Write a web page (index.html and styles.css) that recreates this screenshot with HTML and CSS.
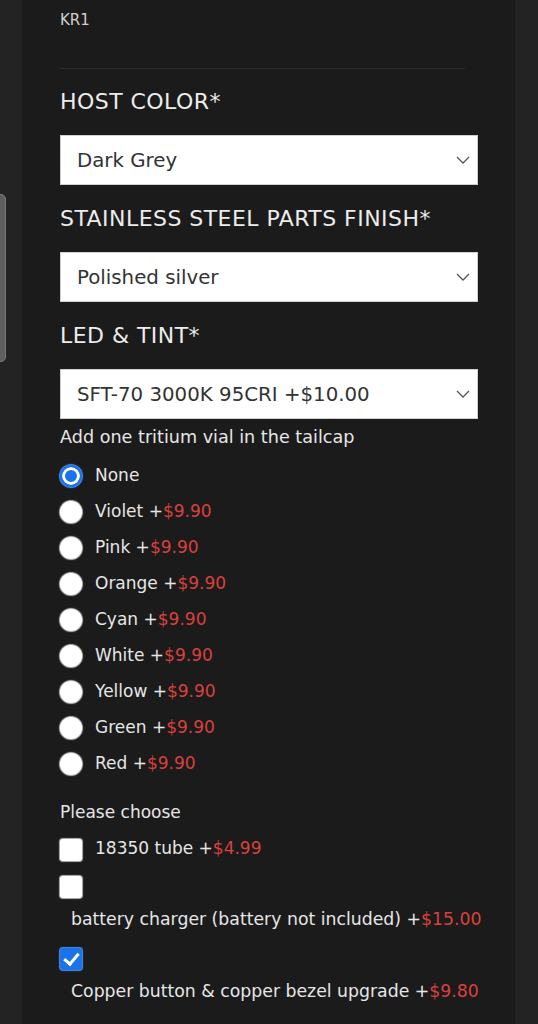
FILE: index.html
```html
<!DOCTYPE html>
<html lang="en">
<head>
    <meta charset="UTF-8">
    <meta name="viewport" content="width=device-width, initial-scale=1.0">
    <title>KR1 Options</title>
    <link rel="stylesheet" href="styles.css">
</head>
<body>

<div class="scroll-tab"></div>

<div class="panel">
    <div class="sku">KR1</div>
    <hr class="divider">

    <form id="options-form">
        <label class="field-title" for="host-color">HOST COLOR*</label>
        <div class="select-wrap">
            <select id="host-color" name="host-color">
                <option>Dark Grey</option>
                <option>Black</option>
            </select>
            <svg class="chevron" width="14" height="8" viewBox="0 0 14 8"><path d="M1 1l6 6 6-6" fill="none" stroke="#555" stroke-width="1.3"/></svg>
        </div>

        <label class="field-title" for="steel-finish">STAINLESS STEEL PARTS FINISH*</label>
        <div class="select-wrap">
            <select id="steel-finish" name="steel-finish">
                <option>Polished silver</option>
            </select>
            <svg class="chevron" width="14" height="8" viewBox="0 0 14 8"><path d="M1 1l6 6 6-6" fill="none" stroke="#555" stroke-width="1.3"/></svg>
        </div>

        <label class="field-title" for="led-tint">LED &amp; TINT*</label>
        <div class="select-wrap">
            <select id="led-tint" name="led-tint">
                <option>SFT-70 3000K 95CRI +$10.00</option>
            </select>
            <svg class="chevron" width="14" height="8" viewBox="0 0 14 8"><path d="M1 1l6 6 6-6" fill="none" stroke="#555" stroke-width="1.3"/></svg>
        </div>

        <div class="group-title">Add one tritium vial in the tailcap</div>
        <div class="radio-list">
            <label class="radio-row"><input type="radio" name="tritium" checked>None</label>
            <label class="radio-row"><input type="radio" name="tritium">Violet +<span class="price">$9.90</span></label>
            <label class="radio-row"><input type="radio" name="tritium">Pink +<span class="price">$9.90</span></label>
            <label class="radio-row"><input type="radio" name="tritium">Orange +<span class="price">$9.90</span></label>
            <label class="radio-row"><input type="radio" name="tritium">Cyan +<span class="price">$9.90</span></label>
            <label class="radio-row"><input type="radio" name="tritium">White +<span class="price">$9.90</span></label>
            <label class="radio-row"><input type="radio" name="tritium">Yellow +<span class="price">$9.90</span></label>
            <label class="radio-row"><input type="radio" name="tritium">Green +<span class="price">$9.90</span></label>
            <label class="radio-row"><input type="radio" name="tritium">Red +<span class="price">$9.90</span></label>
        </div>

        <div class="group-title choose">Please choose</div>
        <label class="check-row"><input type="checkbox" name="tube">18350 tube +<span class="price">$4.99</span></label>
        <div class="check-block">
            <input type="checkbox" id="charger" name="charger">
            <label class="check-label" for="charger">battery charger (battery not included) +<span class="price">$15.00</span></label>
        </div>
        <div class="check-block">
            <input type="checkbox" id="copper" name="copper" checked>
            <label class="check-label" for="copper">Copper button &amp; copper bezel upgrade +<span class="price">$9.80</span></label>
        </div>
    </form>
</div>

</body>
</html>
```

FILE: styles.css
```css
body {
    margin: 0;
    background-color: #232323;
    font-family: "DejaVu Sans", sans-serif;
    color: #e8e8e8;
    height: 1024px;
    overflow: hidden;
}
.scroll-tab {
    position: absolute;
    left: -4px;
    top: 194px;
    width: 8px;
    height: 166px;
    background-color: #5f5f5f;
    border: 1px solid #7a7a7a;
    border-radius: 6px;
}
.panel {
    margin-left: 22px;
    width: 418px;
    min-height: 1024px;
    padding: 10px 37px 0 38px;
    background-color: #1b1b1b;
}
.sku {
    font-size: 15px;
    line-height: 20px;
    color: #cfcfcf;
}
.divider {
    margin: 38px 13px 0 0;
    border: none;
    border-top: 1px solid #2b2b2b;
}
.field-title {
    display: block;
    margin: 19px 0 19px;
    font-size: 22px;
    line-height: 28px;
    letter-spacing: 0.45px;
    color: #ececec;
}
.select-wrap + .field-title {
    margin-top: 20px;
}
.select-wrap {
    position: relative;
    height: 50px;
}
.select-wrap select {
    appearance: none;
    -webkit-appearance: none;
    width: 100%;
    height: 50px;
    padding: 0 40px 0 16px;
    border: 1px solid #cfcfcf;
    border-radius: 0;
    background-color: #fff;
    font-family: inherit;
    font-size: 19.8px;
    color: #333;
}
.chevron {
    position: absolute;
    right: 8px;
    top: 21px;
}
.group-title {
    margin-top: 7px;
    font-size: 17.6px;
    line-height: 22px;
    color: #e6e6e6;
}
.radio-list {
    margin-top: 9px;
}
.radio-row {
    display: flex;
    align-items: center;
    height: 36px;
    font-size: 17px;
    color: #e6e6e6;
    white-space: pre;
}
.radio-row input {
    appearance: none;
    -webkit-appearance: none;
    width: 22px;
    height: 22px;
    margin: 2px 13px 0 0;
    border-radius: 50%;
    background-color: #fff;
    box-shadow: 0 0 1px 1px #bdbdbd;
}
.radio-row input:checked {
    background-color: #1a73e8;
    border: 2px solid #1a73e8;
    box-shadow: inset 0 0 0 3px #fff, 0 0 1px 1px #4a8ef0;
}
.price {
    color: #d9413d;
}
.choose {
    margin-top: 20px;
    font-size: 17px;
}
.check-row {
    display: flex;
    align-items: center;
    margin-top: 12px;
    font-size: 17px;
    color: #e6e6e6;
    white-space: pre;
}
.check-row input,
.check-block input {
    appearance: none;
    -webkit-appearance: none;
    width: 22px;
    height: 22px;
    margin: 0;
    border-radius: 3px;
    background-color: #fff;
    box-shadow: 0 0 1px 1px #b5b5b5;
}
.check-row input {
    margin-right: 13px;
    margin-top: 4px;
}
.check-block {
    margin-top: 15px;
}
.check-block + .check-block {
    margin-top: 18px;
}
.check-block input {
    display: block;
}
.check-block input:checked {
    background-color: #1a73e8;
    box-shadow: 0 0 1px 1px #4a8ef0;
    position: relative;
}
.check-block input:checked::after {
    content: "";
    position: absolute;
    left: 7px;
    top: 2px;
    width: 6px;
    height: 12px;
    border: solid #fff;
    border-width: 0 3px 3px 0;
    transform: rotate(40deg);
}
.check-label {
    display: block;
    margin-top: 10px;
    padding-left: 11px;
    font-size: 17.3px;
    line-height: 22px;
    color: #e6e6e6;
    white-space: nowrap;
}
```
